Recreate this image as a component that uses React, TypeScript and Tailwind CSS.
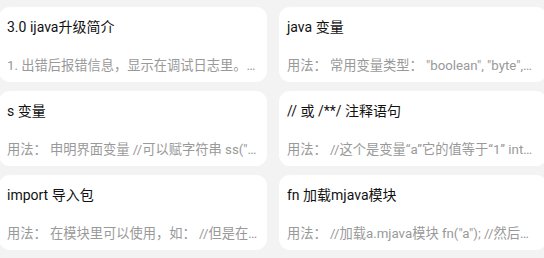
import React from "react";

const cards = [
  {
    title: "3.0 ijava升级简介",
    desc: "1. 出错后报错信息，显示在调试日志里。…",
  },
  {
    title: "java 变量",
    desc: '用法： 常用变量类型： "boolean", "byte",…',
  },
  {
    title: "s 变量",
    desc: '用法： 申明界面变量 //可以赋字符串 ss("…',
  },
  {
    title: "// 或 /**/ 注释语句",
    desc: "用法： //这个是变量“a”它的值等于“1” int…",
  },
  {
    title: "import 导入包",
    desc: "用法： 在模块里可以使用，如： //但是在…",
  },
  {
    title: "fn 加载mjava模块",
    desc: '用法： //加载a.mjava模块 fn("a"); //然后…',
  },
];

export default function App() {
  return (
    <div
      className="w-[544px] h-[258px] overflow-hidden bg-[#f3f3f3]"
      style={{ fontFamily: 'Roboto, "Noto Sans CJK SC", sans-serif' }}
    >
      <div className="grid grid-cols-[268px_268px] gap-x-[12px] gap-y-[9px] pt-[7px] ml-[-1px]">
        {cards.map((c, i) => (
          <div
            key={i}
            className="h-[75px] bg-white rounded-[11px] flex flex-col pl-[8px] pr-[9px] pt-[10px]"
          >
            <div className="text-[14px] leading-[20px] text-[#111111] whitespace-nowrap">
              {c.title}
            </div>
            <div className="mt-[20px] text-[13.25px] leading-[18px] text-[#999999] whitespace-nowrap">
              {c.desc}
            </div>
          </div>
        ))}
      </div>
    </div>
  );
}
